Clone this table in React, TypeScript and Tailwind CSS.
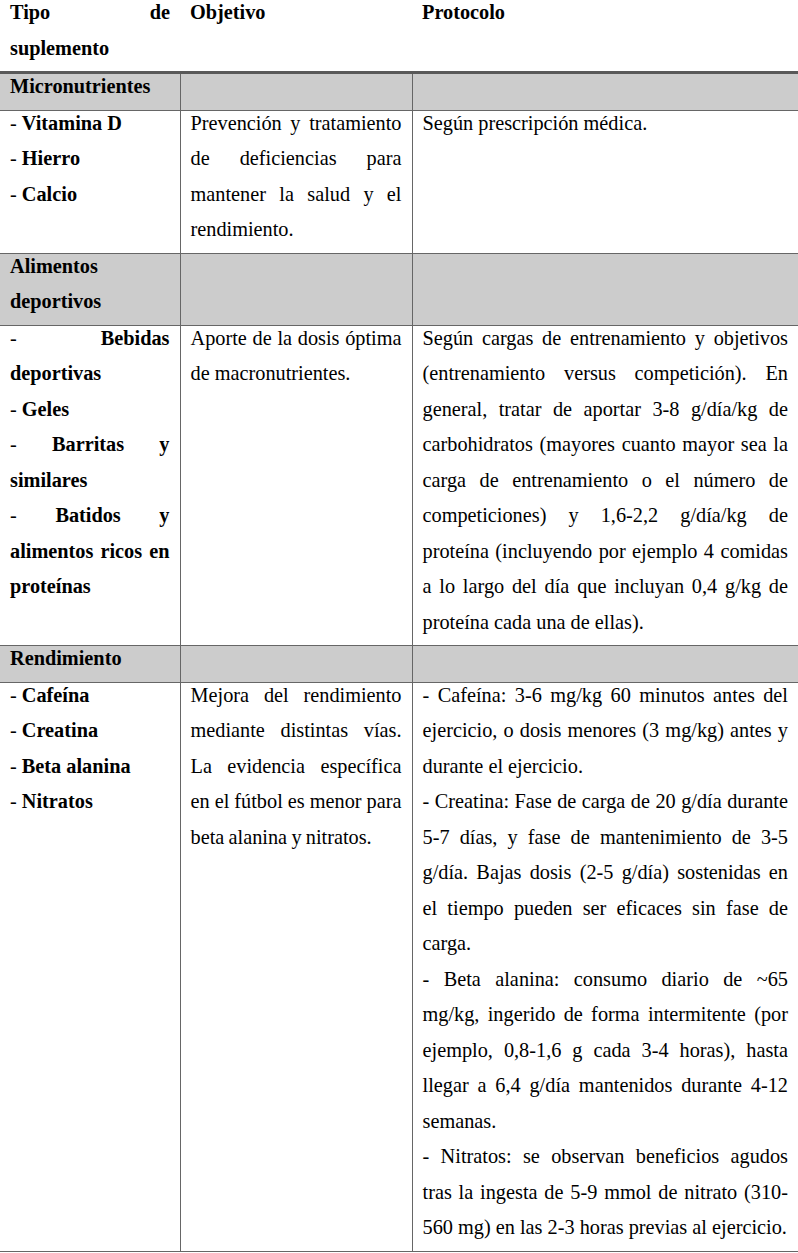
import React from 'react';

type Item = { dash: string; name: string };

const cell = 'align-top px-[10px] pt-0 pb-[5px] text-justify';
const line = 'border-l border-[#666666]';

function Items({ items }: { items: Item[] }) {
  return (
    <div className="-mt-[5px]">
      {items.map((it) => (
        <p key={it.name}>
          {it.dash}
          <b>{it.name}</b>
        </p>
      ))}
    </div>
  );
}

function Body({ children, className = '' }: { children: React.ReactNode; className?: string }) {
  return <div className={`-mt-[5px] ${className}`}>{children}</div>;
}

function GroupRow({ title }: { title: string }) {
  return (
    <tr className="bg-[#cccccc] border-b border-[#666666]">
      <td className={`${cell} font-bold`}>
        <Body>{title}</Body>
      </td>
      <td className={`${cell} ${line}`} />
      <td className={`${cell} ${line}`} />
    </tr>
  );
}

export default function App() {
  return (
    <div className="w-[798px] bg-white text-black font-['Liberation_Serif',serif] text-[20.3px] leading-[35.5px]">
      <table className="w-full border-collapse table-fixed">
        <colgroup>
          <col className="w-[180px]" />
          <col className="w-[232px]" />
          <col />
        </colgroup>
        <thead>
          <tr className="border-b-[3px] border-[#595959]">
            <th className={`${cell} font-bold`}>
              <Body>Tipo de suplemento</Body>
            </th>
            <th className={`${cell} text-left font-bold`}>
              <Body>Objetivo</Body>
            </th>
            <th className={`${cell} text-left font-bold`}>
              <Body>Protocolo</Body>
            </th>
          </tr>
        </thead>
        <tbody>
          <GroupRow title="Micronutrientes" />
          <tr className="border-b border-[#666666]">
            <td className={cell}>
              <Items
                items={[
                  { dash: '- ', name: 'Vitamina D' },
                  { dash: '- ', name: 'Hierro' },
                  { dash: '- ', name: 'Calcio' },
                ]}
              />
            </td>
            <td className={`${cell} ${line}`}>
              <Body>Prevención y tratamiento de deficiencias para mantener la salud y el rendimiento.</Body>
            </td>
            <td className={`${cell} ${line}`}>
              <Body>Según prescripción médica.</Body>
            </td>
          </tr>

          <GroupRow title="Alimentos deportivos" />
          <tr className="border-b border-[#666666]">
            <td className={cell}>
              <Items
                items={[
                  { dash: '- ', name: 'Bebidas deportivas' },
                  { dash: '- ', name: 'Geles' },
                  { dash: '- ', name: 'Barritas y similares' },
                  { dash: '- ', name: 'Batidos y alimentos ricos en proteínas' },
                ]}
              />
            </td>
            <td className={`${cell} ${line}`}>
              <Body>Aporte de la dosis óptima de macronutrientes.</Body>
            </td>
            <td className={`${cell} ${line}`}>
              <Body>
                Según cargas de entrenamiento y objetivos (entrenamiento versus competición). En
                general, tratar de aportar 3-8 g/día/kg de carbohidratos (mayores cuanto mayor sea la
                carga de entrenamiento o el número de competiciones) y 1,6-2,2 g/día/kg de proteína
                (incluyendo por ejemplo 4 comidas a lo largo del día que incluyan 0,4 g/kg de proteína
                cada una de ellas).
              </Body>
            </td>
          </tr>

          <GroupRow title="Rendimiento" />
          <tr className="border-b border-[#666666]">
            <td className={cell}>
              <Items
                items={[
                  { dash: '- ', name: 'Cafeína' },
                  { dash: '- ', name: 'Creatina' },
                  { dash: '- ', name: 'Beta alanina' },
                  { dash: '- ', name: 'Nitratos' },
                ]}
              />
            </td>
            <td className={`${cell} ${line}`}>
              <Body className="[word-spacing:-0.8px]">
                Mejora del rendimiento mediante distintas vías. La evidencia específica en el fútbol es
                menor para beta alanina y nitratos.
              </Body>
            </td>
            <td className={`${cell} ${line}`}>
              <Body>
                <p>
                  - Cafeína: 3-6 mg/kg 60 minutos antes del ejercicio, o dosis menores (3 mg/kg) antes
                  y durante el ejercicio.
                </p>
                <p>
                  - Creatina: Fase de carga de 20 g/día durante 5-7 días, y fase de mantenimiento de
                  3-5 g/día. Bajas dosis (2-5 g/día) sostenidas en el tiempo pueden ser eficaces sin
                  fase de carga.
                </p>
                <p>
                  - Beta alanina: consumo diario de ~65 mg/kg, ingerido de forma intermitente (por
                  ejemplo, 0,8-1,6 g cada 3-4 horas), hasta llegar a 6,4 g/día mantenidos durante
                  4-12 semanas.
                </p>
                <p>
                  - Nitratos: se observan beneficios agudos tras la ingesta de 5-9 mmol de nitrato
                  (310-560 mg) en las 2-3 horas previas al ejercicio.
                </p>
              </Body>
            </td>
          </tr>
        </tbody>
      </table>
    </div>
  );
}
